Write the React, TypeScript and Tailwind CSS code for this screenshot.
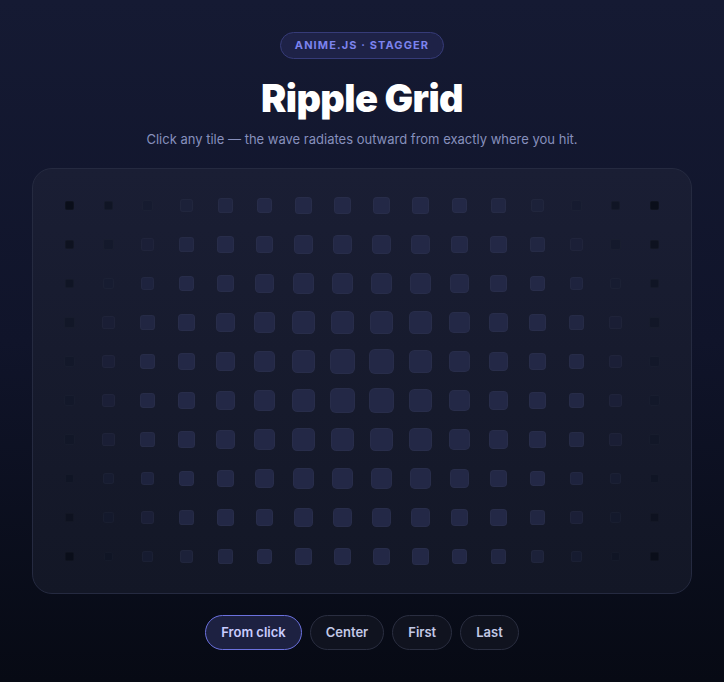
import { useState } from "react";

const COLS = 16;
const ROWS = 10;

// frozen frame of the ripple: size and tint fall off with distance from origin
const tileStyle = (c: number, r: number) => {
  const d = Math.hypot(c - 7.5, r - 4.5);
  const size = Math.max(9, 27.4 - 2.25 * d);
  const t = Math.min(1, Math.max(0, (d - 5.4) / 3.35));
  const from = [35, 40, 70];
  const to = [10, 14, 26];
  const [R, G, B] = from.map((v, i) => Math.round(v + (to[i] - v) * t));
  return {
    width: `${size}px`,
    height: `${size}px`,
    borderRadius: `${size * 0.23}px`,
    backgroundColor: `rgb(${R}, ${G}, ${B})`,
  };
};

const modes = ["From click", "Center", "First", "Last"];

export default function App() {
  const [mode, setMode] = useState("From click");

  return (
    <div className="min-h-screen w-full flex flex-col items-center bg-gradient-to-b from-[#151a33] via-[#10142a] to-[#070a14] pt-8 font-['Inter',sans-serif]">
      <span className="rounded-full border border-[#363b78] bg-[#1e2247] px-[14px] h-[27px] flex items-center text-[11px] font-bold tracking-[0.1em] text-[#7c83ee]">
        ANIME.JS · STAGGER
      </span>

      <h1 className="mt-[17px] text-[38px] leading-[44px] font-black tracking-[-0.015em] text-white">
        Ripple Grid
      </h1>
      <p className="mt-[9px] text-[13px] leading-5 text-[#8790bd]">
        Click any tile — the wave radiates outward from exactly where you hit.
      </p>

      <div className="mt-[19px] w-[660px] rounded-[20px] border border-[#252a40] bg-gradient-to-b from-[#1a1e34] to-[#131726] px-[17px] py-[17px]">
        <div className="grid grid-cols-[repeat(16,39px)] grid-rows-[repeat(10,39px)]">
          {Array.from({ length: ROWS * COLS }, (_, i) => {
            const c = i % COLS;
            const r = Math.floor(i / COLS);
            return (
              <div key={i} className="flex items-center justify-center cursor-pointer">
                <div className="border border-white/[0.025]" style={tileStyle(c, r)} />
              </div>
            );
          })}
        </div>
      </div>

      <div className="mt-[21px] flex gap-[8px]">
        {modes.map((m) => (
          <button
            key={m}
            onClick={() => setMode(m)}
            className={
              m === mode
                ? "h-[35px] rounded-full border border-[#6b71de] bg-[#1d2141] px-[15px] text-[13px] font-semibold text-[#c9ccff]"
                : "h-[35px] rounded-full border border-[#2a2e40] bg-[#10131f] px-[15px] text-[13px] font-semibold text-[#c3c9e6]"
            }
          >
            {m}
          </button>
        ))}
      </div>
    </div>
  );
}
